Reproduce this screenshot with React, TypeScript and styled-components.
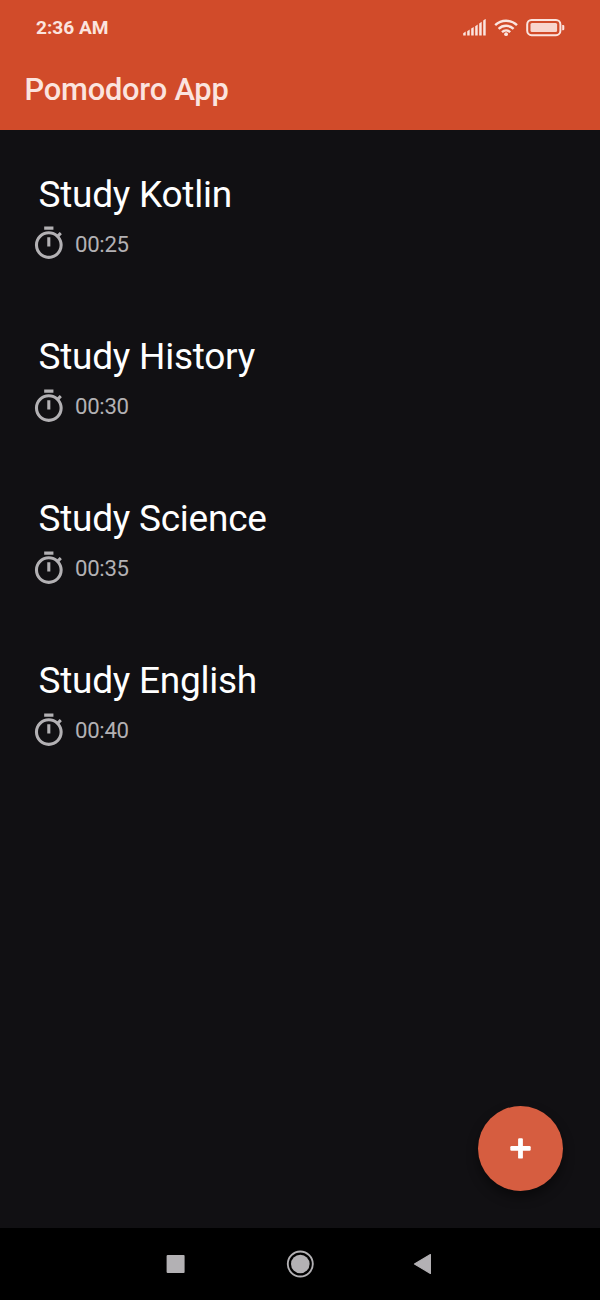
import React from "react";
import styled, { createGlobalStyle } from "styled-components";

const GlobalStyle = createGlobalStyle`
  * { box-sizing: border-box; }
  body { margin: 0; background: #111013; font-family: Roboto, sans-serif; }
`;

const Screen = styled.div`
  position: relative;
  display: flex;
  flex-direction: column;
  width: 600px;
  height: 1300px;
  background: #111013;
  overflow: hidden;
`;

const Header = styled.header`
  height: 130px;
  background: #d14b2a;
  color: #fbe4df;
`;

const StatusBar = styled.div`
  display: flex;
  align-items: center;
  justify-content: space-between;
  height: 55px;
  padding: 0 35px 0 36px;
`;

const Clock = styled.span`
  font-size: 19.1px;
  font-weight: 700;
  line-height: 22px;
`;

const StatusIcons = styled.svg`
  display: block;
  width: 102px;
  height: 18px;
`;

const AppTitle = styled.h1`
  margin: 0;
  padding: 17px 0 0 24.5px;
  font-size: 30.8px;
  font-weight: 500;
  letter-spacing: -0.2px;
  line-height: 36px;
`;

const TaskList = styled.ul`
  flex: 1;
  margin: 0;
  padding: 0;
  list-style: none;
`;

const TaskItem = styled.li`
  height: 162.1px;
  padding: 43.2px 30px 0;
`;

const TaskName = styled.div`
  padding-left: 8.5px;
  color: #ffffff;
  font-size: 37px;
  letter-spacing: -0.25px;
  line-height: 44px;
`;

const TaskTime = styled.div`
  display: flex;
  align-items: center;
  gap: 8px;
  margin-top: 7.8px;
  color: #b3b1b4;
  font-size: 22.2px;
  letter-spacing: -0.3px;
  line-height: 37px;
`;

const TimeText = styled.span`
  padding-top: 1px;
`;

const TimerSvg = styled.svg`
  display: block;
  width: 37px;
  height: 37px;
  fill: #b3b1b4;
`;

const AddButton = styled.button`
  position: absolute;
  right: 37px;
  bottom: 109px;
  display: flex;
  align-items: center;
  justify-content: center;
  width: 85.4px;
  height: 85.4px;
  padding: 0;
  border: 0;
  border-radius: 50%;
  background: #d65d40;
  box-shadow: 0 6px 12px rgba(0, 0, 0, 0.45);
`;

const NavBar = styled.nav`
  height: 72px;
  background: #000000;
`;

const NavIcons = styled.svg`
  display: block;
  width: 600px;
  height: 72px;
`;

const tasks = [
  { name: "Study Kotlin", time: "00:25" },
  { name: "Study History", time: "00:30" },
  { name: "Study Science", time: "00:35" },
  { name: "Study English", time: "00:40" },
];

const TimerIcon = () => (
  <TimerSvg viewBox="-0.2 0 24 24">
    <path d="M15 1H9v2h6V1zm-4 13h2V8h-2v6zm8.03-6.61l1.42-1.42c-.43-.51-.9-.99-1.41-1.41l-1.42 1.42C16.07 4.74 14.12 4 12 4c-4.97 0-9 4.03-9 9s4.02 9 9 9 9-4.03 9-9c0-2.12-.74-4.07-1.97-5.61zM12 20c-3.87 0-7-3.13-7-7s3.13-7 7-7 7 3.13 7 7-3.13 7-7 7z" />
  </TimerSvg>
);

const signalBars = [
  { x: 0.2, h: 3.2 },
  { x: 4.2, h: 5.2 },
  { x: 8.2, h: 7.8 },
  { x: 12.2, h: 10.2 },
  { x: 16.2, h: 13 },
  { x: 20.2, h: 16 },
];

export default function App() {
  return (
    <Screen>
      <GlobalStyle />
      <Header>
        <StatusBar>
          <Clock>2:36 AM</Clock>
          <StatusIcons viewBox="0 0 102 18">
            <g fill="#fbe4df">
              {signalBars.map((bar) => (
                <path
                  key={bar.x}
                  d={`M${bar.x} 16.4V${17.4 - bar.h}l2.5-1.6V16.4z`}
                />
              ))}
            </g>
            <g fill="none" stroke="#fbe4df" strokeWidth="2.4">
              <path d="M32.2 6.2a15.6 15.6 0 0 1 21.8 0" />
              <path d="M35.6 9.8a10.8 10.8 0 0 1 15 0" />
              <path d="M39 13.1a6 6 0 0 1 8.2 0" />
            </g>
            <circle cx="43.1" cy="15.2" r="1.9" fill="#fbe4df" />
            <rect x="64.2" y="1" width="33.2" height="15.2" rx="4.4" fill="none" stroke="#fbe4df" strokeWidth="2" />
            <rect x="67.5" y="4.1" width="26.6" height="9" rx="1.5" fill="#f8d5cd" />
            <path d="M99.2 5.9h0.9q1.2 0 1.2 1.2v3q0 1.2-1.2 1.2h-0.9z" fill="#fbe4df" />
          </StatusIcons>
        </StatusBar>
        <AppTitle>Pomodoro App</AppTitle>
      </Header>
      <TaskList>
        {tasks.map((task) => (
          <TaskItem key={task.name}>
            <TaskName>{task.name}</TaskName>
            <TaskTime>
              <TimerIcon />
              <TimeText>{task.time}</TimeText>
            </TaskTime>
          </TaskItem>
        ))}
      </TaskList>
      <AddButton aria-label="Add">
        <svg width="22" height="22" viewBox="-0.5 -0.4 22 22" fill="#ffffff">
          <rect x="0.8" y="8.6" width="20.4" height="4.8" rx="1.2" />
          <rect x="8.6" y="0.8" width="4.8" height="20.4" rx="1.2" />
        </svg>
      </AddButton>
      <NavBar>
        <NavIcons viewBox="0 0 600 72">
          <rect x="166.6" y="27" width="18" height="18" rx="1" fill="#b3b1b4" />
          <circle cx="300.3" cy="36" r="12.5" fill="none" stroke="#b3b1b4" strokeWidth="1.9" />
          <circle cx="300.3" cy="36" r="9.3" fill="#b3b1b4" />
          <path d="M414.5 36L430.4 26.6V45.4z" fill="#b3b1b4" stroke="#b3b1b4" strokeWidth="1.2" strokeLinejoin="round" />
        </NavIcons>
      </NavBar>
    </Screen>
  );
}
